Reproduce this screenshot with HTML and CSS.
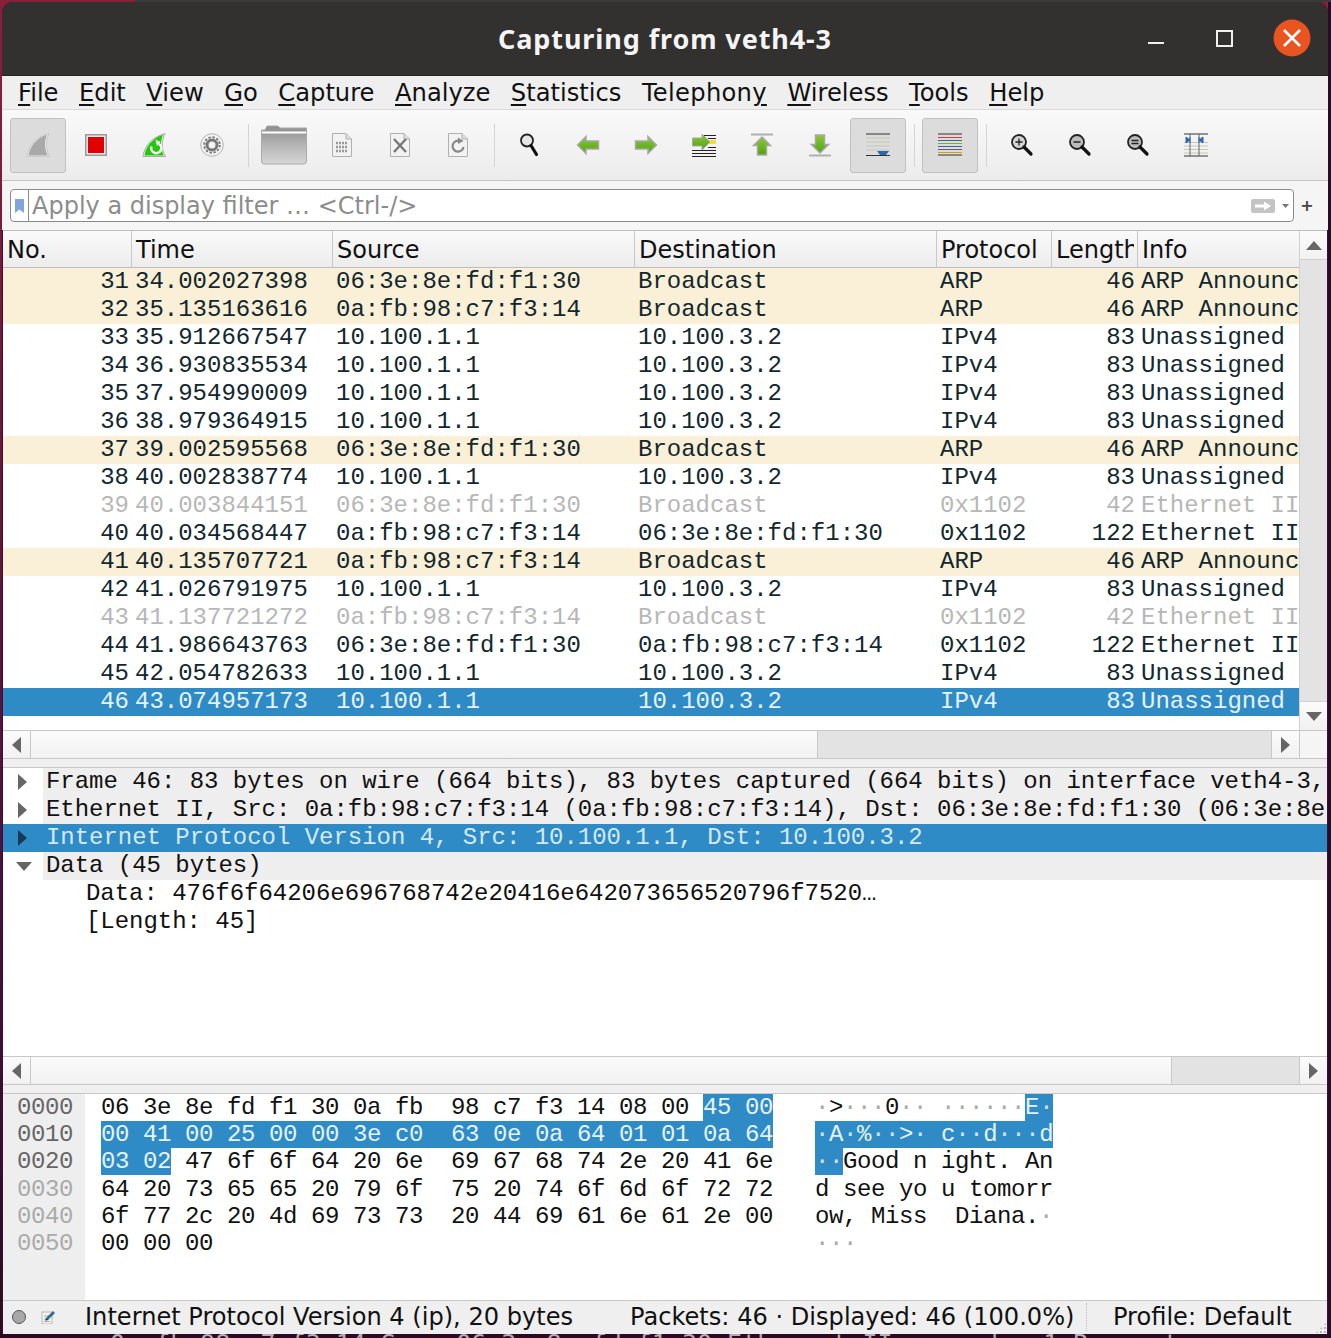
FILE: index.html
```html
<!DOCTYPE html>
<html lang="en">
<head>
    <meta charset="UTF-8">
    <title>Capturing from veth4-3</title>
    <link rel="stylesheet" href="styles.css">
</head>
<body>
<svg class="defs" width="0" height="0">
    <defs>
        <linearGradient id="folder" x1="0" y1="0" x2="0" y2="1"><stop offset="0" stop-color="#8d8d8d"/><stop offset=".55" stop-color="#b8b8b8"/><stop offset="1" stop-color="#d6d6d6"/></linearGradient>
        <linearGradient id="green" x1="0" y1="0" x2="0" y2="1"><stop offset="0" stop-color="#8ac93a"/><stop offset="1" stop-color="#4fa30c"/></linearGradient>
    </defs>
</svg>
<div class="window">
    <div class="titlebar">
        <div class="title">Capturing from veth4-3</div>
        <div class="win-btns">
            <span class="win-min"></span>
            <span class="win-max"></span>
            <span class="win-close">
                <svg width="38" height="38" viewBox="0 0 38 38"><circle cx="19" cy="19" r="18.5" fill="#e95420"/><path d="M11 11 L27 27 M27 11 L11 27" stroke="#fff" stroke-width="2.6"/></svg>
            </span>
        </div>
    </div>

    <div class="menubar">
        <span><u>F</u>ile</span><span><u>E</u>dit</span><span><u>V</u>iew</span><span><u>G</u>o</span><span><u>C</u>apture</span><span><u>A</u>nalyze</span><span><u>S</u>tatistics</span><span class="m-wide">Telephon<u>y</u></span><span><u>W</u>ireless</span><span><u>T</u>ools</span><span><u>H</u>elp</span>
    </div>

    <div class="toolbar">
        <div class="tool on"><svg width="24" height="24" viewBox="0 0 24 24"><path d="M1 23.500 C2 14 9 4.500 23 .5 C19 9 19.500 16 23.500 23.500 Z" fill="#eee" stroke="#b5b5b5" stroke-width=".6"/><path d="M2.500 22.500 C3.500 14 10 5.500 21 1.800 C18 9 18.500 16 21.800 22.500 Z" fill="#a9a9a9"/></svg></div>
        <div class="tool"><svg width="22" height="22" viewBox="0 0 22 22"><rect x=".75" y=".75" width="20.500" height="20.500" fill="#ececec" stroke="#999" stroke-width="1.500"/><rect x="3" y="3" width="16" height="16" fill="#e00000"/></svg></div>
        <div class="tool"><svg width="24" height="24" viewBox="0 0 24 24"><path d="M1 23.500 C2 14 9 4.500 23 .5 C19 9 19.500 16 23.500 23.500 Z" fill="#eee" stroke="#9a9a9a" stroke-width=".8"/><path d="M2.500 22.500 C3.500 14 10 5.500 21 1.800 C18 9 18.500 16 21.800 22.500 Z" fill="#22c80a"/><path d="M17 11 A5 5 0 1 1 9.500 13.500" fill="none" stroke="#fff" stroke-width="2.500"/><path d="M13.500 6.500 L18.500 9 L15 13 Z" fill="#fff"/></svg></div>
        <div class="tool"><svg width="24" height="24" viewBox="0 0 24 24"><circle cx="12" cy="12" r="11.300" fill="#f2f2f2" stroke="#b5b5b5"/><circle cx="12" cy="12" r="7.800" fill="none" stroke="#777" stroke-width="1.800" stroke-dasharray="2.400 1.700"/><circle cx="12" cy="12" r="5" fill="none" stroke="#777" stroke-width="3"/></svg></div>
        <span class="sep"></span>
        <div class="tool"><svg width="46" height="40" viewBox="0 0 46 40"><path d="M.5 5 H4 L6 1 H17 L19 3 H45.500 V36 Q45.500 39 43 39 H3 Q.5 39 .5 36 Z" fill="url(#folder)" stroke="#aaa"/><path d="M1 7.500 H45" stroke="#fff" stroke-width="2"/></svg></div>
        <div class="tool"><svg width="20" height="24" viewBox="0 0 20 24"><path d="M.5.5 H14 L19.500 6 V23.500 H.5 Z" fill="#f2f2f2" stroke="#b0b0b0"/><path d="M14 .5 V6 H19.500" fill="#ddd" stroke="#b0b0b0"/><path d="M4 10 H16 M4 14 H16 M4 18 H16" stroke="#999" stroke-width="2.500" stroke-dasharray="2 1"/></svg></div>
        <div class="tool"><svg width="20" height="24" viewBox="0 0 20 24"><path d="M.5.5 H14 L19.500 6 V23.500 H.5 Z" fill="#f2f2f2" stroke="#b0b0b0"/><path d="M14 .5 V6 H19.500" fill="#ddd" stroke="#b0b0b0"/><path d="M4 6 L16 19 M16 6 L4 19" stroke="#777" stroke-width="2.400"/></svg></div>
        <div class="tool"><svg width="20" height="24" viewBox="0 0 20 24"><path d="M.5.5 H14 L19.500 6 V23.500 H.5 Z" fill="#f2f2f2" stroke="#b0b0b0"/><path d="M14 .5 V6 H19.500" fill="#ddd" stroke="#b0b0b0"/><path d="M12 8 A5.500 5.500 0 1 0 15.500 14" fill="none" stroke="#888" stroke-width="2.200"/><path d="M10 4.500 L15.500 8 L10 11 Z" fill="#888"/></svg></div>
        <span class="sep"></span>
        <div class="tool"><svg width="24" height="24" viewBox="0 0 24 24"><circle cx="9" cy="7.500" r="6" fill="#e6e6e6" stroke="#222" stroke-width="1.800"/><path d="M13 12.500 L18.500 21.500" stroke="#111" stroke-width="3.200" stroke-linecap="round"/></svg></div>
        <div class="tool"><svg width="24" height="24" viewBox="0 0 24 24"><path d="M1.500 12 L10 3.500 V8 H22.500 V16 H10 V20.500 Z" fill="url(#green)" stroke="#a8a8a8" stroke-width="1.500"/></svg></div>
        <div class="tool"><svg width="24" height="24" viewBox="0 0 24 24"><path d="M22.500 12 L14 3.500 V8 H1.500 V16 H14 V20.500 Z" fill="url(#green)" stroke="#a8a8a8" stroke-width="1.500"/></svg></div>
        <div class="tool"><svg width="24" height="24" viewBox="0 0 24 24"><path d="M10 2.500 H24 M0 17.500 H24 M0 20.500 H24 M0 23.500 H24 M16 5.500 H24 M16 14.500 H24" stroke="#222"/><rect x="16" y="7" width="8" height="4" fill="#f5d94a"/><path d="M18 9 L10 1 V5 H.5 V13 H10 V17 Z" fill="url(#green)" stroke="#a8a8a8"/></svg></div>
        <div class="tool"><svg width="24" height="24" viewBox="0 0 24 24"><path d="M1 1.500 H23" stroke="#b0b0b0" stroke-width="2"/><path d="M12 4 L20.500 12.500 H16.500 V22 H7.500 V12.500 H3.500 Z" fill="url(#green)" stroke="#a8a8a8" stroke-width="1.500"/></svg></div>
        <div class="tool"><svg width="24" height="24" viewBox="0 0 24 24"><path d="M1 22.500 H23" stroke="#b0b0b0" stroke-width="2"/><path d="M12 20 L20.500 11.500 H16.500 V2 H7.500 V11.500 H3.500 Z" fill="url(#green)" stroke="#a8a8a8" stroke-width="1.500"/></svg></div>
        <div class="tool on"><svg width="24" height="24" viewBox="0 0 24 24"><path d="M0 1 H24 M0 22.500 H24" stroke="#333"/><path d="M0 5 H24 M0 9 H24 M0 13 H24 M0 17 H24" stroke="#c6c6bc"/><path d="M11 18 H23 L20 22 H14 Z" fill="#2d68ad"/></svg></div>
        <span class="sep"></span>
        <div class="tool on"><svg width="24" height="24" viewBox="0 0 24 24"><path d="M0 1 H24 M0 22 H24" stroke="#333"/><path d="M0 4.500 H24" stroke="#d83a3a"/><path d="M0 7.500 H24" stroke="#3465a4"/><path d="M0 10.500 H24" stroke="#73b32a"/><path d="M0 13.500 H24" stroke="#3465a4"/><path d="M0 16.500 H24" stroke="#75507b"/><path d="M0 19.500 H24" stroke="#d0a400"/></svg></div>
        <span class="sep"></span>
        <div class="tool"><svg width="24" height="24" viewBox="0 0 24 24"><circle cx="9" cy="9" r="7" fill="#d4d4d4" stroke="#222" stroke-width="1.800"/><path d="M5.500 9 H12.500 M9 5.500 V12.500" stroke="#222" stroke-width="1.300"/><path d="M14 14 L21 21" stroke="#111" stroke-width="3.200" stroke-linecap="round"/></svg></div>
        <div class="tool"><svg width="24" height="24" viewBox="0 0 24 24"><circle cx="9" cy="9" r="7" fill="#bcbcbc" stroke="#222" stroke-width="1.800"/><path d="M5.500 9 H12.500" stroke="#222" stroke-width="1.300"/><path d="M14 14 L21 21" stroke="#111" stroke-width="3.200" stroke-linecap="round"/></svg></div>
        <div class="tool"><svg width="24" height="24" viewBox="0 0 24 24"><circle cx="9" cy="9" r="7" fill="#bcbcbc" stroke="#222" stroke-width="1.800"/><path d="M5.500 7.500 H12.500 M5.500 10.500 H12.500" stroke="#222" stroke-width="1.300"/><path d="M14 14 L21 21" stroke="#111" stroke-width="3.200" stroke-linecap="round"/></svg></div>
        <div class="tool"><svg width="24" height="24" viewBox="0 0 24 24"><path d="M0 1 H24 M0 23 H24" stroke="#333"/><path d="M0 9.500 H24 M0 13 H24 M0 16.500 H24 M0 20 H24" stroke="#c6c6bc"/><path d="M6 1 V23 M15 1 V23" stroke="#666"/><path d="M2 4 L6 7 L2 10 Z M19 4 L15 7 L19 10 Z M6 4 V10 M15 4 V10" fill="#2d68ad" stroke="#2d68ad"/></svg></div>
    </div>

    <div class="filterbar">
        <div class="filter">
            <span class="bookmark"><svg width="9" height="14" viewBox="0 0 9 14"><path d="M0 0 H9 V14 L4.500 10.500 L0 14 Z" fill="#7ea6dc"/></svg></span>
            <span class="filter-text">Apply a display filter … &lt;Ctrl-/&gt;</span>
            <svg class="filter-go" width="24" height="14" viewBox="0 0 24 14"><rect width="24" height="14" rx="2" fill="#c4c4c4"/><path d="M4 5.500 H13 V2.500 L20 7 L13 11.500 V8.500 H4 Z" fill="#fff"/></svg>
            <svg class="filter-drop" width="7" height="4" viewBox="0 0 7 4"><path d="M0 0 H7 L3.500 4 Z" fill="#777"/></svg>
        </div>
        <span class="filter-plus">+</span>
    </div>

    <div class="body">
        <div class="packets">
            <div class="packet-main">
                <div class="head">
                    <span class="c-no">No.</span><span class="c-time">Time</span><span class="c-src">Source</span><span class="c-dst">Destination</span><span class="c-proto">Protocol</span><span class="c-len">Length</span><span class="c-info">Info</span>
                </div>
                <div class="rows" id="rows"></div>
            </div>
            <div class="vscroll">
                <div class="arrow-btn"><i class="tri-up"></i></div>
                <div class="vtrack"></div>
                <div class="arrow-btn"><i class="tri-down"></i></div>
            </div>
        </div>
        <div class="hscroll hs-packets">
            <div class="arrow-btn"><i class="tri-left"></i></div>
            <div class="hthumb" style="width: 787px"></div>
            <div class="htrack"></div>
            <div class="arrow-btn"><i class="tri-right"></i></div>
            <div class="corner"></div>
        </div>
        <div class="splitter"></div>

        <div class="details">
            <div class="d-row"><i class="tri-right"></i><span class="d-text">Frame 46: 83 bytes on wire (664 bits), 83 bytes captured (664 bits) on interface veth4-3, id 0</span></div>
            <div class="d-row"><i class="tri-right"></i><span class="d-text">Ethernet II, Src: 0a:fb:98:c7:f3:14 (0a:fb:98:c7:f3:14), Dst: 06:3e:8e:fd:f1:30 (06:3e:8e:fd:f1:30)</span></div>
            <div class="d-row sel"><i class="tri-right"></i><span class="d-text">Internet Protocol Version 4, Src: 10.100.1.1, Dst: 10.100.3.2</span></div>
            <div class="d-row"><i class="tri-down"></i><span class="d-text">Data (45 bytes)</span></div>
            <div class="d-sub">Data: 476f6f64206e696768742e20416e642073656520796f7520…</div>
            <div class="d-sub">[Length: 45]</div>
        </div>
        <div class="hscroll hs-details">
            <div class="arrow-btn"><i class="tri-left"></i></div>
            <div class="hthumb" style="width: 1141px"></div>
            <div class="htrack"></div>
            <div class="arrow-btn"><i class="tri-right"></i></div>
        </div>
        <div class="splitter"></div>

        <div class="bytes">
            <div class="offsets">
                <div>0000</div><div>0010</div><div>0020</div><div class="dim">0030</div><div class="dim">0040</div><div class="dim">0050</div>
            </div>
            <div class="hex">
                <div>06 3e 8e fd f1 30 0a fb  98 c7 f3 14 08 00 <b>45 00</b></div>
                <div><b>00 41 00 25 00 00 3e c0  63 0e 0a 64 01 01 0a 64</b></div>
                <div><b>03 02</b> 47 6f 6f 64 20 6e  69 67 68 74 2e 20 41 6e</div>
                <div>64 20 73 65 65 20 79 6f  75 20 74 6f 6d 6f 72 72</div>
                <div>6f 77 2c 20 4d 69 73 73  20 44 69 61 6e 61 2e 00</div>
                <div>00 00 00</div>
            </div>
            <div class="ascii">
                <div><em>·</em>&gt;<em>···</em>0<em>··</em> <em>······</em><b>E<em>·</em></b></div>
                <div><b><em>·</em>A<em>·</em>%<em>··</em>&gt;<em>·</em> c<em>··</em>d<em>···</em>d</b></div>
                <div><b><em>··</em></b>Good n ight. An</div>
                <div>d see yo u tomorr</div>
                <div>ow, Miss  Diana.<em>·</em></div>
                <div><em>···</em></div>
            </div>
        </div>

        <div class="statusbar">
            <span class="led"></span>
            <svg class="note" width="14" height="14" viewBox="0 0 14 14"><rect x="1" y="2" width="10" height="12" fill="#f4f4e8" stroke="#aaa" stroke-width=".8"/><path d="M3 6 H8 M3 9 H8 M3 11.500 H9" stroke="#aaa"/><path d="M5 8 L12 1 L14 3 L7 10 L4.500 10.500 Z" fill="#2f6f9f"/><path d="M5 8 L7 10 L4.500 10.500 Z" fill="#333"/></svg>
            <span class="st-field">Internet Protocol Version 4 (ip), 20 bytes</span>
            <span class="st-packets">Packets: 46 · Displayed: 46 (100.0%)</span>
            <span class="st-profile">Profile: Default</span>
            <span class="grip"></span>
        </div>
    </div>
</div>
<div class="terminal">0a:fb:98:c7:f3:14 Seen 06:3e:8e:fd:f1:30 Ethernet II op code: 1 Request</div>

<script>
    var A1 = ['06:3e:8e:fd:f1:30', 'Broadcast', 'ARP', 46, 'ARP  Announc'];
    var A2 = ['0a:fb:98:c7:f3:14', 'Broadcast', 'ARP', 46, 'ARP  Announc'];
    var IP = ['10.100.1.1', '10.100.3.2', 'IPv4', 83, 'Unassigned'];
    var rows = [
        [31, '34.002027398', A1, 'arp'], [32, '35.135163616', A2, 'arp'],
        [33, '35.912667547', IP], [34, '36.930835534', IP], [35, '37.954990009', IP], [36, '38.979364915', IP],
        [37, '39.002595568', A1, 'arp'], [38, '40.002838774', IP],
        [39, '40.003844151', ['06:3e:8e:fd:f1:30', 'Broadcast', '0x1102', 42, 'Ethernet II'], 'grey'],
        [40, '40.034568447', ['0a:fb:98:c7:f3:14', '06:3e:8e:fd:f1:30', '0x1102', 122, 'Ethernet II']],
        [41, '40.135707721', A2, 'arp'], [42, '41.026791975', IP],
        [43, '41.137721272', ['0a:fb:98:c7:f3:14', 'Broadcast', '0x1102', 42, 'Ethernet II'], 'grey'],
        [44, '41.986643763', ['06:3e:8e:fd:f1:30', '0a:fb:98:c7:f3:14', '0x1102', 122, 'Ethernet II']],
        [45, '42.054782633', IP], [46, '43.074957173', IP, 'sel']
    ];
    var list = document.getElementById('rows');
    rows.forEach(function (r) {
        var d = r[2];
        var row = document.createElement('div');
        row.className = 'row ' + (r[3] || '');
        row.innerHTML = '<span class="c-no">' + r[0] + '</span><span class="c-time">' + r[1] + '</span>' +
            '<span class="c-src">' + d[0] + '</span><span class="c-dst">' + d[1] + '</span>' +
            '<span class="c-proto">' + d[2] + '</span><span class="c-len">' + d[3] + '</span>' +
            '<span class="c-info">' + d[4] + '</span>';
        list.appendChild(row);
    });
</script>
</body>
</html>
```

FILE: styles.css
```css
body {
    margin: 0;
    width: 1331px;
    height: 1338px;
    overflow: hidden;
    background:
        linear-gradient(#3a3a3a, #3a3a3a) 135px 0 / 100% 2px no-repeat,
        linear-gradient(90deg, transparent 1328px, #2c0a24 1328px),
        linear-gradient(#8a1f3c, #4a1040 65%, #2c0a24);
    font-family: "DejaVu Sans", sans-serif;
    color: #111;
}
.defs {
    position: absolute;
}

.window {
    margin: 2px 3px 0 2px;
    height: 1332px;
    background: #3a1030;
    border-radius: 11px 11px 0 0;
    overflow: hidden;
    display: flex;
    flex-direction: column;
}

/* Title bar */
.titlebar {
    height: 74px;
    flex: none;
    background: #333030;
    border-bottom: 1px solid #262424;
    box-sizing: border-box;
    position: relative;
    display: flex;
    align-items: center;
    justify-content: center;
}
.title {
    color: #f5f5f5;
    font-size: 27px;
    font-weight: bold;
    font-family: "Noto Sans", "DejaVu Sans", sans-serif;
    letter-spacing: .9px;
}
.win-btns {
    position: absolute;
    right: 17px;
    top: 17px;
    display: flex;
    align-items: center;
}
.win-min {
    width: 16px;
    height: 2px;
    background: #f0f0f0;
    position: relative;
    top: 5px;
}
.win-max {
    width: 13px;
    height: 13px;
    border: 2px solid #f0f0f0;
    margin-left: 52px;
}
.win-close {
    margin-left: 40px;
    height: 38px;
}

/* Menu */
.menubar {
    height: 34px;
    flex: none;
    background: #efefef;
    border-bottom: 1px solid #d9d9d9;
    box-sizing: border-box;
    display: flex;
    gap: 20.5px;
    padding-left: 16px;
    font-size: 24.2px;
    line-height: 35px;
    color: #111;
}
.menubar .m-wide {
    letter-spacing: .3px;
}
.menubar u {
    text-underline-offset: 3px;
    text-decoration-thickness: 2px;
}

/* Toolbar */
.toolbar {
    height: 71px;
    flex: none;
    box-sizing: border-box;
    background: linear-gradient(#f9f9f9, #ececec);
    border-bottom: 1px solid #c4c4c4;
    padding: 8px 0 0 8px;
    display: flex;
    align-items: flex-start;
}
.tool {
    width: 56px;
    height: 55px;
    margin-right: 2px;
    padding-bottom: 1px;
    box-sizing: border-box;
    display: flex;
    align-items: center;
    justify-content: center;
    border: 1px solid transparent;
    border-radius: 3px;
}
.tool.on {
    background: #dcdcdc;
    border-color: #c0c0c0;
}
.sep {
    width: 1px;
    height: 43px;
    margin: 6px 7px 0 6px;
    background: #d4d4d4;
}

/* Display filter */
.filterbar {
    height: 49px;
    flex: none;
    box-sizing: border-box;
    background: #f5f5f5;
    padding: 8px 0 0 8px;
    display: flex;
}
.filter {
    width: 1284px;
    height: 33px;
    box-sizing: border-box;
    background: #fff;
    border: 1px solid #8a8a8a;
    border-radius: 4px;
    display: flex;
    align-items: center;
}
.bookmark {
    width: 18px;
    height: 31px;
    flex: none;
    box-sizing: border-box;
    border-right: 1px solid #8a8a8a;
    display: flex;
    align-items: center;
    justify-content: center;
}
.filter-text {
    flex: 1;
    height: 31px;
    margin-left: 3px;
    font-size: 24px;
    color: #8c8c8c;
    white-space: nowrap;
    line-height: 33px;
}
.filter-go {
    flex: none;
}
.filter-drop {
    flex: none;
    margin: 0 4px 0 7px;
}
.filter-plus {
    width: 26px;
    text-align: center;
    font-size: 16px;
    font-weight: bold;
    line-height: 33px;
    color: #444;
}

/* Everything under the filter bar sits 1px in from the window edges */
.body {
    margin: 0 1px;
    flex: 1;
    display: flex;
    flex-direction: column;
    min-height: 0;
}

/* Packet list */
.packets {
    height: 499px;
    flex: none;
    display: flex;
    border-top: 1px solid #bdbdbd;
}
.packet-main {
    width: 1296px;
    flex: none;
    background: #fff;
}
.head {
    height: 37px;
    box-sizing: border-box;
    display: flex;
    background: linear-gradient(#fafafa, #ececec);
    border-bottom: 1px solid #bdbdbd;
    font-size: 24px;
    color: #111;
}
.head span {
    height: 36px;
    box-sizing: border-box;
    padding-left: 4px;
    line-height: 38px;
    border-right: 1px solid #c8c8c8;
    overflow: hidden;
    white-space: nowrap;
}
.head .c-len {
    padding-right: 3px;
    overflow: clip;
    overflow-clip-margin: content-box;
}
.head .c-info {
    border-right: none;
}
.c-no { width: 129px; }
.c-time { width: 201px; }
.c-src { width: 302px; }
.c-dst { width: 302px; }
.c-proto { width: 115px; }
.c-len { width: 86px; }
.c-info { width: 161px; }

.rows {
    font-family: "Liberation Mono", monospace;
    font-size: 24px;
    color: #12272e;
}
.row {
    height: 28px;
    display: flex;
    line-height: 27px;
    white-space: nowrap;
}
.row span {
    box-sizing: border-box;
    padding-left: 3px;
    overflow: hidden;
}
.row .c-no {
    text-align: right;
    padding: 0 3px 0 0;
}
.row .c-len {
    text-align: right;
    padding: 0 3px 0 0;
}
.row.arp { background: #faf0d7; }
.row.grey { color: #b7b7b7; }
.row.sel {
    background: #2f8bc6;
    color: #e6f2fa;
}

.vscroll {
    width: 28px;
    flex: none;
    display: flex;
    flex-direction: column;
    background: #fbfbfb;
    border-left: 1px solid #d0d0d0;
    box-sizing: border-box;
}
.vtrack {
    flex: 1;
    background: #e3e3e3;
    border-top: 1px solid #d0d0d0;
    border-bottom: 1px solid #d0d0d0;
}
.arrow-btn {
    width: 28px;
    height: 27px;
    flex: none;
    display: flex;
    align-items: center;
    justify-content: center;
    background: linear-gradient(#fbfbfb, #f1f1f1);
}
.vscroll .arrow-btn {
    width: 27px;
    height: 28px;
}

/* Triangles */
i {
    display: block;
    width: 0;
    height: 0;
    flex: none;
}
.tri-up {
    border-left: 8px solid transparent;
    border-right: 8px solid transparent;
    border-bottom: 9px solid #666;
}
.tri-down {
    border-left: 8px solid transparent;
    border-right: 8px solid transparent;
    border-top: 9px solid #666;
}
.tri-left {
    border-top: 8px solid transparent;
    border-bottom: 8px solid transparent;
    border-right: 9px solid #666;
}
.tri-right {
    border-top: 8px solid transparent;
    border-bottom: 8px solid transparent;
    border-left: 9px solid #666;
}

/* Scrollbars */
.hscroll {
    height: 29px;
    flex: none;
    box-sizing: border-box;
    display: flex;
    border-top: 1px solid #c8c8c8;
    border-bottom: 1px solid #c8c8c8;
    background: #e3e3e3;
}
.hscroll .arrow-btn {
    box-sizing: border-box;
    border-right: 1px solid #c8c8c8;
}
.hs-packets .arrow-btn:nth-child(4),
.hs-details .arrow-btn:nth-child(4) {
    border-left: 1px solid #c8c8c8;
    border-right: none;
}
.hthumb {
    flex: none;
    background: linear-gradient(#fbfbfb, #f1f1f1);
    border-right: 1px solid #c8c8c8;
    box-sizing: border-box;
}
.htrack { flex: 1; }
.corner {
    width: 28px;
    background: #f5f5f5;
    border-left: 1px solid #c8c8c8;
    box-sizing: border-box;
}
.splitter {
    height: 9px;
    flex: none;
    background: #efefef;
    border-bottom: 1px solid #c8c8c8;
    box-sizing: border-box;
}

/* Packet details */
.details {
    height: 288px;
    flex: none;
    background: #fff;
    font-family: "Liberation Mono", monospace;
    font-size: 24px;
    letter-spacing: -.03px;
    line-height: 28px;
    overflow: hidden;
}
.d-row {
    height: 28px;
    display: flex;
    align-items: center;
    white-space: nowrap;
}
.d-row .tri-right { margin: 0 16px 0 15px; }
.d-row .tri-down { margin: 0 11px 0 13px; }
.d-text {
    flex: 1;
    height: 28px;
    padding-left: 3px;
    background: #eeeeee;
    overflow: hidden;
    color: #111;
}
.d-row.sel {
    background: #2f8bc6;
}
.d-row.sel .tri-right { border-left-color: #173a57; }
.d-row.sel .d-text {
    background: #2f8bc6;
    color: #d5e9f6;
}
.d-sub {
    height: 28px;
    padding-left: 83px;
    white-space: nowrap;
    color: #111;
}

/* Packet bytes */
.bytes {
    height: 206px;
    flex: none;
    display: flex;
    background: #fff;
    font-family: "Liberation Mono", monospace;
    font-size: 24px;
    letter-spacing: -.4px;
    line-height: 27.2px;
    color: #111;
}
.bytes > div > div {
    height: 27.2px;
    white-space: pre;
}
.offsets {
    width: 82px;
    flex: none;
    box-sizing: border-box;
    background: #eeeeee;
    padding-left: 14px;
    color: #666;
}
.offsets .dim { color: #aaa; }
.hex {
    width: 730px;
    flex: none;
    box-sizing: border-box;
    padding-left: 16px;
}
.ascii {
    flex: 1;
}
.bytes b {
    font-weight: normal;
    background: #2f8bc6;
    color: #e6f2fa;
}
.ascii em {
    font-style: normal;
    color: #aaa;
}
.ascii b em { color: #cfe4f3; }

/* Status bar */
.statusbar {
    height: 34px;
    flex: none;
    box-sizing: border-box;
    background: #efefef;
    border-top: 1px solid #c8c8c8;
    padding-bottom: 1px;
    display: flex;
    align-items: center;
    font-size: 24.1px;
    color: #111;
    white-space: nowrap;
}
.led {
    width: 12px;
    height: 12px;
    margin-left: 9px;
    border-radius: 50%;
    background: #a8a8a8;
    border: 1px solid #555;
}
.note {
    margin-left: 15px;
}
.st-field {
    margin-left: 30px;
    width: 545px;
}
.st-packets {
    width: 456px;
    border-right: 1px dotted #bbb;
}
.st-profile {
    margin-left: 26px;
    width: 188px;
}
.grip {
    width: 12px;
    height: 12px;
    margin: auto 0 -1px auto;
    background: radial-gradient(circle, #b5b5b5 1px, transparent 1.200px) 0 0 / 4px 4px;
    clip-path: polygon(100% 0, 100% 100%, 0 100%);
}

.terminal {
    height: 4px;
    overflow: hidden;
    padding-left: 110px;
    font-family: "DejaVu Sans Mono", monospace;
    font-size: 25px;
    line-height: 20px;
    color: #b9aab5;
    white-space: nowrap;
}
```
